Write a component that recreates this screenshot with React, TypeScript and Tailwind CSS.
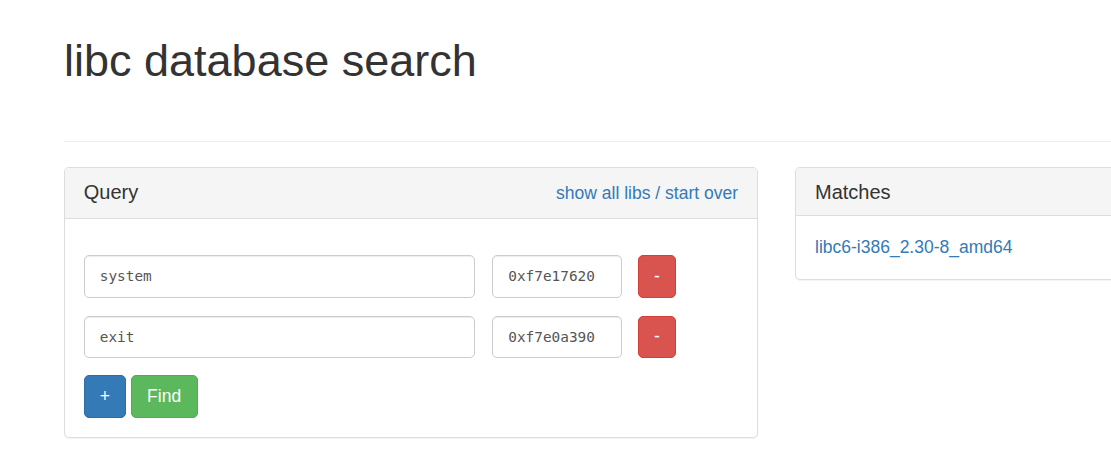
import React from "react";

const inputCls =
  "h-[42.5px] rounded-[5px] border border-[#ccc] bg-white px-[15px] text-[14.4px] text-[#555] shadow-[inset_0_1px_1px_rgba(0,0,0,0.075)] outline-none [font-family:'DejaVu_Sans_Mono','Liberation_Mono',monospace]";

function Row({ name, addr }: { name: string; addr: string }) {
  return (
    <div className="flex items-center">
      <input className={`${inputCls} w-[391.5px]`} defaultValue={name} />
      <input className={`${inputCls} ml-[17px] w-[129.5px]`} defaultValue={addr} />
      <button className="ml-[16.5px] h-[42.5px] w-[37.5px] rounded-[5px] border border-[#d43f3a] bg-[#d9534f] text-[17.5px] leading-[25px] text-white">
        -
      </button>
    </div>
  );
}

export default function App() {
  return (
    <div className="h-[467px] w-[1111px] overflow-hidden bg-white text-[#333] [font-family:'Liberation_Sans',Arial,sans-serif]">
      <div className="w-[1425px] pl-[64px]">
        <h1 className="pt-[36px] text-[45px] font-normal leading-[49.5px]">libc database search</h1>
        <div className="mt-[55.5px] border-t border-[#eee]" />
        <div className="mt-[25px] flex items-start gap-[37.5px]">
          <div className="w-[693.75px] shrink-0 rounded-[5px] border border-[#ddd] bg-white shadow-[0_1px_1px_rgba(0,0,0,0.05)]">
            <div className="flex items-start justify-between rounded-t-[4px] border-b border-[#ddd] bg-[#f5f5f5] px-[18.75px] py-[12.5px]">
              <div className="text-[20px] leading-[22px]">Query</div>
              <div className="text-[17.5px] leading-[25px] text-[#337ab7]">
                <span>show all libs</span> / <span>start over</span>
              </div>
            </div>
            <div className="px-[18.75px] pb-[19px] pt-[36px]">
              <Row name="system" addr="0xf7e17620" />
              <div className="mt-[18px]">
                <Row name="exit" addr="0xf7e0a390" />
              </div>
              <div className="mt-[17px] flex items-center">
                <button className="h-[42.5px] w-[42px] rounded-[5px] border border-[#2e6da4] bg-[#337ab7] text-[17.5px] leading-[25px] text-white">
                  +
                </button>
                <button className="ml-[5px] h-[42.5px] w-[66.75px] rounded-[5px] border border-[#4cae4c] bg-[#5cb85c] text-[17.5px] leading-[25px] text-white">
                  Find
                </button>
              </div>
            </div>
          </div>
          <div className="w-[693.75px] shrink-0 rounded-[5px] border border-[#ddd] bg-white shadow-[0_1px_1px_rgba(0,0,0,0.05)]">
            <div className="rounded-t-[4px] border-b border-[#ddd] bg-[#f5f5f5] px-[18.75px] py-[12.5px]">
              <div className="text-[20px] leading-[22px]">Matches</div>
            </div>
            <div className="p-[18.75px]">
              <div className="text-[17.5px] leading-[25px] text-[#337ab7]">libc6-i386_2.30-8_amd64</div>
            </div>
          </div>
        </div>
      </div>
    </div>
  );
}
